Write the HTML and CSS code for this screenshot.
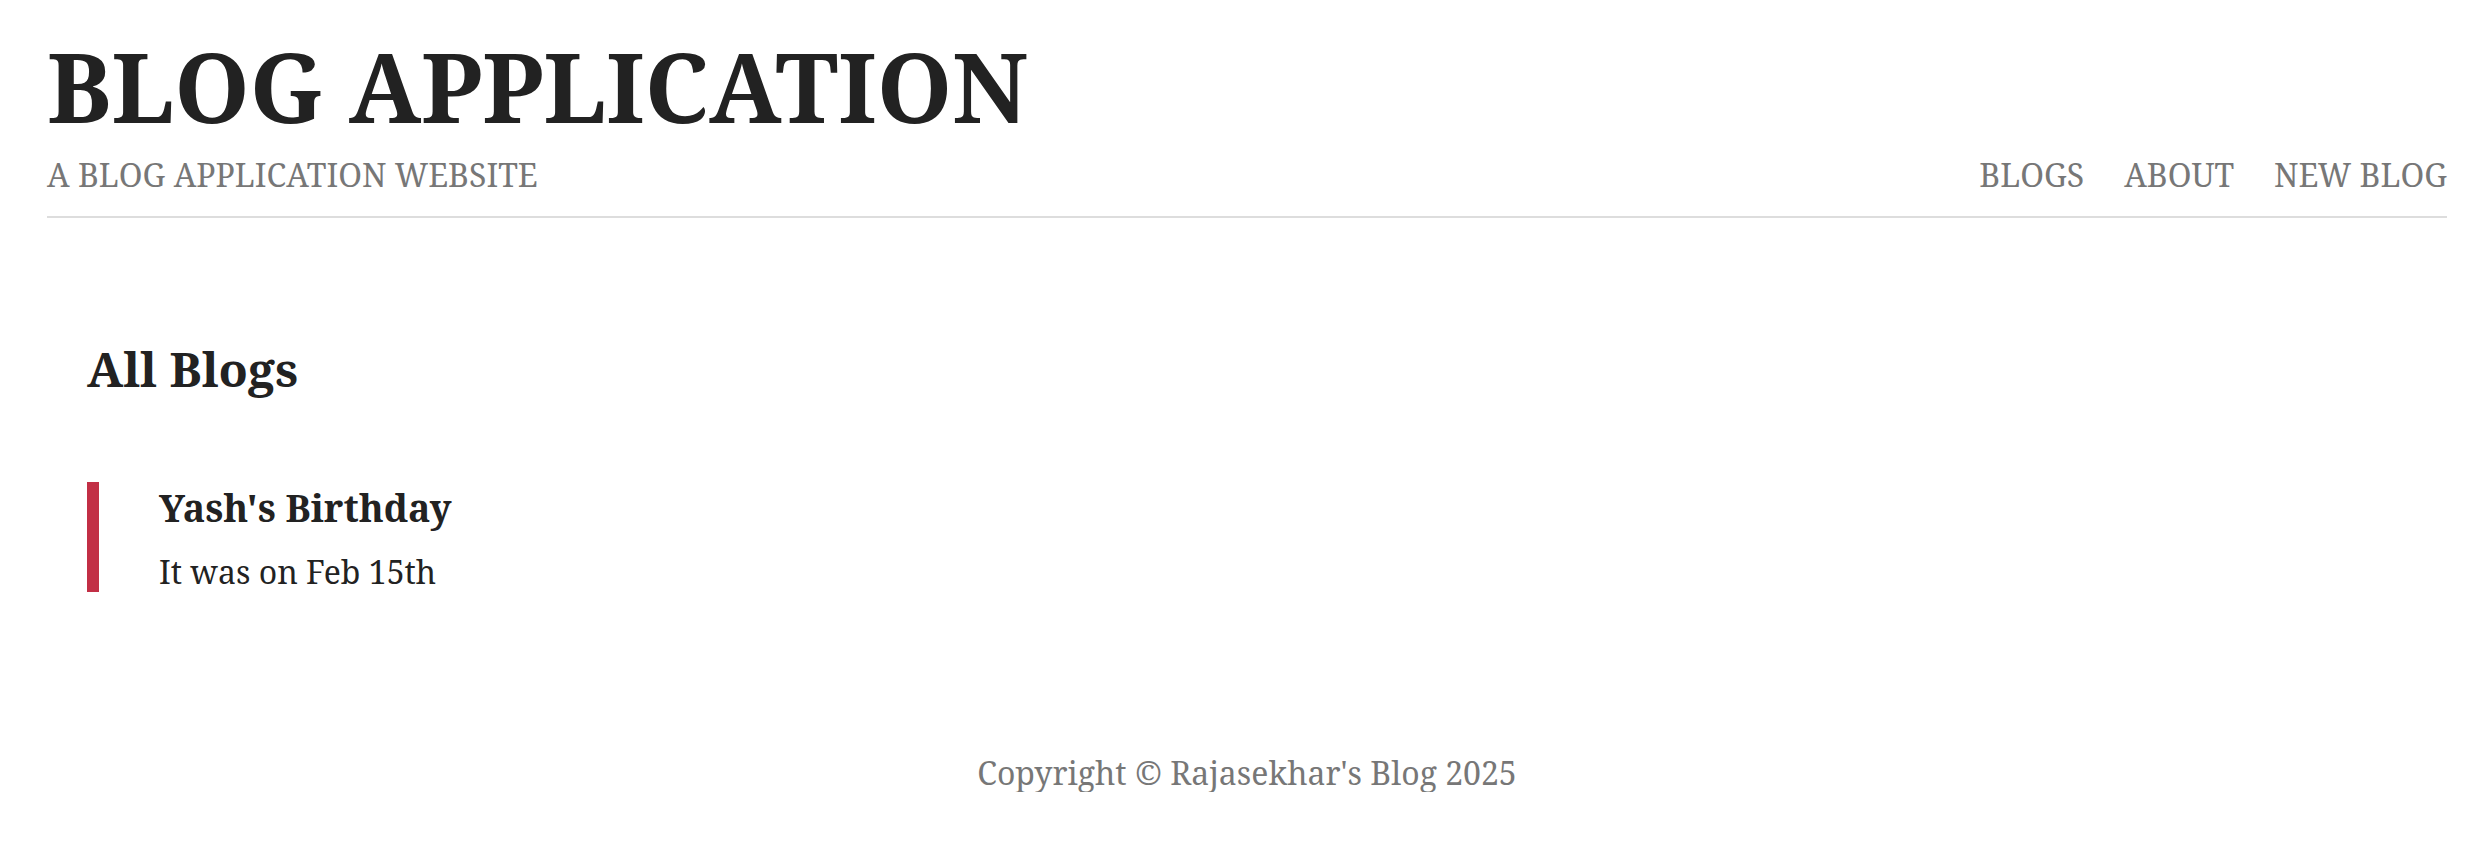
FILE: index.html
```html
<!DOCTYPE html>
<html lang="en">
<head>
<meta charset="utf-8">
<title>Blog Application</title>
<link rel="stylesheet" href="styles.css">
</head>
<body>
<div class="page">
  <header class="site-header">
    <h1 class="site-title">BLOG APPLICATION</h1>
    <div class="header-row">
      <p class="tagline">A BLOG APPLICATION WEBSITE</p>
      <nav class="nav">
        <a class="nav-link" href="#">BLOGS</a>
        <a class="nav-link" href="#">ABOUT</a>
        <a class="nav-link" href="#">NEW BLOG</a>
      </nav>
    </div>
  </header>
  <main class="main">
    <h2 class="section-title">All Blogs</h2>
    <article class="blog-item">
      <h3 class="blog-title">Yash's Birthday</h3>
      <p class="blog-text">It was on Feb 15th</p>
    </article>
  </main>
  <footer class="footer">Copyright © Rajasekhar's Blog 2025</footer>
</div>
</body>
</html>
```
FILE: styles.css
```css
html, body {
  margin: 0;
  padding: 0;
  background: #ffffff;
}
body {
  font-family: "Noto Serif", "DejaVu Serif", serif;
  color: #222222;
  font-size: 32px;
  line-height: 1.2;
}
.page {
  margin-left: 47px;
  width: 2400px;
}
.site-header {
  padding-top: 28px;
  padding-bottom: 21px;
  border-bottom: 2px solid #dddddd;
}
.site-title {
  margin: 0;
  font-size: 96px;
  line-height: 1.2;
  font-weight: 700;
  color: #222222;
}
.header-row {
  margin-top: 13px;
  display: flex;
  justify-content: space-between;
  align-items: baseline;
}
.tagline {
  margin: 0;
  color: #777777;
}
.nav {
  display: flex;
  gap: 40px;
}
.nav-link {
  color: #777777;
  text-decoration: none;
}
.main {
  padding: 122px 40px 0 40px;
}
.section-title {
  margin: 0;
  font-size: 48px;
  line-height: 1.2;
  font-weight: 700;
}
.blog-item {
  margin-top: 85px;
  border-left: 12px solid #c22f45;
  padding: 3px 0 0 60px;
}
.blog-title {
  margin: 0;
  font-size: 37.5px;
  line-height: 1.2;
  font-weight: 700;
}
.blog-text {
  margin: 23px 0 0 0;
}
.footer {
  margin-top: 162px;
  text-align: center;
  color: #777777;
}
```
